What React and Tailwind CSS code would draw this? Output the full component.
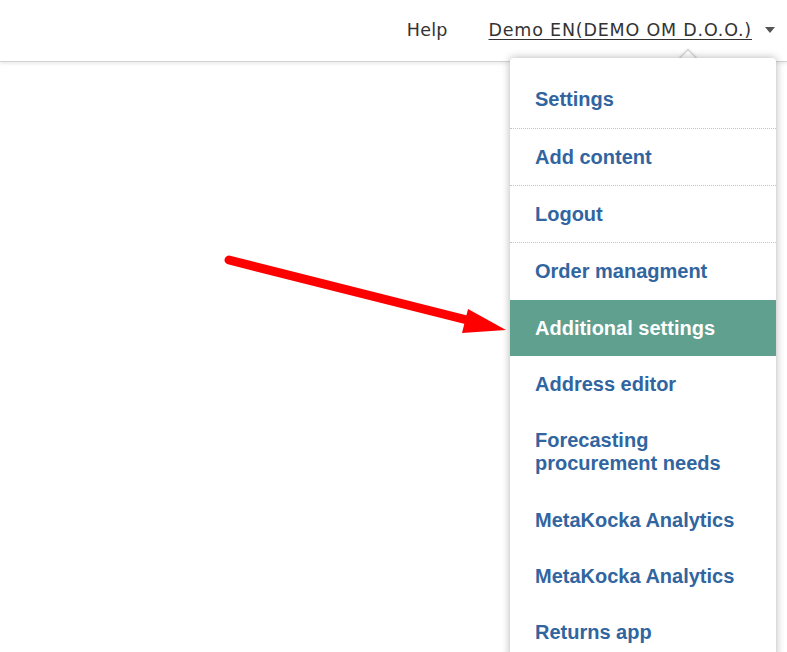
import React from "react";

const items = [
  { label: "Settings", border: true, cls: "pt-[16.5px] pb-[17.5px]" },
  { label: "Add content", border: true, cls: "py-[16.5px]" },
  { label: "Logout", border: true, cls: "py-[16.5px]" },
  { label: "Order managment", cls: "py-[17px]" },
  { label: "Additional settings", active: true, cls: "py-[16.5px]" },
  { label: "Address editor", cls: "py-[16.5px]" },
  { label: "Forecasting procurement needs", wrap: true, cls: "py-[17px]" },
  { label: "MetaKocka Analytics", cls: "py-[16.5px]" },
  { label: "MetaKocka Analytics", cls: "py-[16.5px]" },
  { label: "Returns app", cls: "py-[16.5px]" },
];

export default function App() {
  return (
    <div className="relative w-[787px] h-[652px] overflow-hidden bg-white">
      <header className="h-[62px] border-b border-[#d4d4d4] shadow-[0_2px_3px_rgba(0,0,0,0.08)] flex items-center justify-end pr-[12px] [font-family:'DejaVu_Sans',Verdana,sans-serif] text-[17.5px] text-[#333]">
        <span className="mr-[41px] pb-[1px] tracking-[0.2px]">Help</span>
        <span className="underline underline-offset-[3px] decoration-[1px] pb-[1px] tracking-[0.8px]">Demo EN(DEMO OM D.O.O.)</span>
        <span className="ml-[13px] mb-[2px] w-0 h-0 border-l-[5px] border-r-[5px] border-t-[6px] border-l-transparent border-r-transparent border-t-[#555]" />
      </header>

      {/* dropdown pointer */}
      <div className="absolute left-[681px] top-[52px] w-[14px] h-[14px] rotate-45 bg-white border-l border-t border-[#cfcfcf] shadow-[-1px_-1px_2px_rgba(0,0,0,0.08)]" />

      {/* dropdown menu */}
      <div className="absolute left-[510px] top-[58px] w-[266px] bg-white rounded-t-[4px] shadow-[0_0_8px_rgba(0,0,0,0.3)] pt-[13px] [font-family:'Liberation_Sans',Arial,sans-serif]">
        {items.map((it, i) => (
          <div
            key={i}
            className={
              "px-[25px] text-[20px] leading-[23px] font-bold " +
              it.cls +
              " " +
              (it.active ? "bg-[#5fa08f] text-white " : "text-[#31659f] ") +
              (it.border ? "border-b border-dotted border-[#c4c4c4] " : "") +
              (it.wrap ? "pr-[40px]" : "")
            }
          >
            {it.label}
          </div>
        ))}
      </div>

      {/* red arrow */}
      <svg className="absolute left-0 top-0" width="787" height="652" viewBox="0 0 787 652">
        <line x1="229" y1="260" x2="475" y2="322" stroke="#ff0000" strokeWidth="9" strokeLinecap="round" />
        <polygon points="468,309 462,333 506,330" fill="#ff0000" />
      </svg>
    </div>
  );
}
